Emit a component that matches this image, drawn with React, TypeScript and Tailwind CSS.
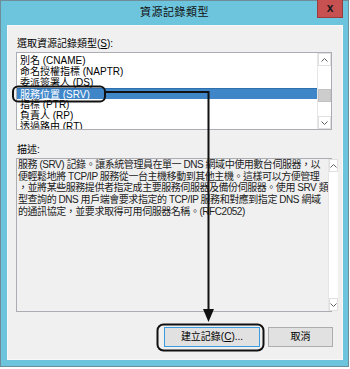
const listItems = [
  { label: '別名 (CNAME)' },
  { label: '命名授權指標 (NAPTR)' },
  { label: '委派簽署人 (DS)' },
  { label: '服務位置 (SRV)', selected: true },
  { label: '指標 (PTR)' },
  { label: '負責人 (RP)' },
  { label: '透過路由 (RT)' },
];

const descLines = [
  '服務 (SRV) 記錄。讓系統管理員在單一 DNS 網域中使用數台伺服器，以',
  '便輕鬆地將 TCP/IP 服務從一台主機移動到其他主機。這樣可以方便管理',
  '，並將某些服務提供者指定成主要服務伺服器及備份伺服器。使用 SRV 類',
  '型查詢的 DNS 用戶端會要求指定的 TCP/IP 服務和對應到指定 DNS 網域',
  '的通訊協定，並要求取得可用伺服器名稱。(RFC2052)',
];

const Chevron = ({ up }: { up?: boolean }) => (
  <svg width="7" height="4" viewBox="0 0 7 4" className="text-[#606060]">
    <path d={up ? 'M0.5 3.5 L3.5 0.5 L6.5 3.5' : 'M0.5 0.5 L3.5 3.5 L6.5 0.5'} fill="none" stroke="currentColor" strokeWidth="1" />
  </svg>
);

const ScrollBar = ({ thumb }: { thumb?: boolean }) => (
  <div className="w-[14px] h-full bg-white border-l border-[#e6e6e6] flex flex-col">
    <div className="h-[13px] border border-[#e0e0e0] flex items-center justify-center">
      <Chevron up />
    </div>
    <div className="flex-1 flex flex-col">
      {thumb && <div className="mt-[23px] h-[13px] bg-[#cdcdcd] border border-[#c2c2c2]" />}
    </div>
    <div className="h-[13px] border border-[#e0e0e0] flex items-center justify-center">
      <Chevron />
    </div>
  </div>
);

export default function App() {
  return (
    <div className="relative w-[350px] h-[369px] bg-white font-['Liberation_Sans','Noto_Sans_CJK_TC',sans-serif] text-black">
      <div className="w-[349px] h-[367px] border border-[#6e8d98] bg-[#6cc4dd] flex flex-col">
        {/* title bar */}
        <div className="relative h-[24px] shrink-0 flex items-center justify-center">
          <span className="text-[11px] leading-none tracking-[0.5px] mt-[-1px] text-[#111]">資源記錄類型</span>
          <div className="absolute right-[5px] top-[-1px] w-[26px] h-[18px] bg-[#c75050] border border-[#9c3b3b] border-t-0 flex items-center justify-center">
            <span className="text-[12px] leading-none font-bold text-[#1a1a1a] mt-[-2px]">x</span>
          </div>
        </div>

        {/* client area */}
        <div className="ml-[6px] w-[336px] flex-1 mb-[6px] bg-[#f0f0f0] border border-[#f8f8f8] flex flex-col">
          <div className="pl-[9px] pt-[11px] text-[10px] leading-[13px]">
            選取資源記錄類型(<span className="underline">S</span>):
          </div>

          <div className="ml-[8px] mt-[2px] w-[316px] h-[78px] bg-white border border-[#abadb3] flex">
            <div className="flex-1 pt-[2px] overflow-hidden">
              {listItems.map((it) => (
                <div
                  key={it.label}
                  className={
                    'h-[11px] pl-[3px] text-[10px] leading-[11px] whitespace-nowrap ' +
                    (it.selected ? 'bg-[#3f86c9] text-white border-t border-[#2f6fae] leading-[10px]' : '')
                  }
                >
                  {it.label}
                </div>
              ))}
            </div>
            <ScrollBar thumb />
          </div>

          <div className="pl-[9px] mt-[13px] text-[10px] leading-[13px]">描述:</div>

          <div className="ml-[8px] mt-[2px] w-[316px] h-[154px] bg-[#f0f0f0] border border-[#abadb3] flex">
            <div className="flex-1 pl-[1px] pt-[0px] text-[10px] leading-[11.7px] tracking-[-0.45px] text-[#222]">
              {descLines.map((l) => (
                <div key={l} className="whitespace-nowrap">
                  {l}
                </div>
              ))}
            </div>
            <ScrollBar />
          </div>

          <div className="mt-[15px] mr-[9px] flex justify-end gap-[8px]">
            <button className="w-[96px] h-[20px] bg-[#e1e1e1] border border-[#3c9bde] text-[10px] leading-none flex items-center justify-center">
              建立記錄(<span className="underline">C</span>)...
            </button>
            <button className="w-[65px] h-[20px] bg-[#e1e1e1] border border-[#adadad] text-[10px] leading-none flex items-center justify-center">
              取消
            </button>
          </div>
        </div>
      </div>

      {/* annotation overlay */}
      <svg className="absolute left-0 top-0 pointer-events-none" width="350" height="369" viewBox="0 0 350 369">
        <rect x="13" y="86.5" width="92" height="15" rx="5" fill="none" stroke="#111" strokeWidth="2" />
        <path d="M105 92 H208.5 V312" fill="none" stroke="#111" strokeWidth="2" />
        <polygon points="203,309 214,309 208.5,322" fill="#111" />
        <rect x="157.5" y="324.5" width="106" height="26" rx="6" fill="none" stroke="#111" strokeWidth="2" />
      </svg>
    </div>
  );
}
